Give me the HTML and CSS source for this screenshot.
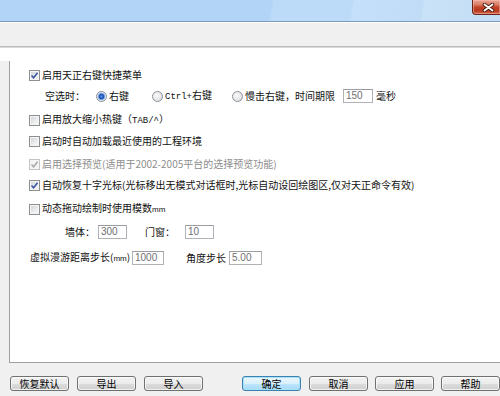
FILE: index.html
```html
<!DOCTYPE html>
<html lang="zh-CN">
<head>
<meta charset="utf-8">
<link rel="stylesheet" href="styles.css">
</head>
<body>
<div class="window">
  <div class="titlebar">
    <div class="close-btn">
      <svg width="13" height="9" viewBox="0 0 13 9"><path d="M2.5 1.5 L10.5 7.5 M10.5 1.5 L2.5 7.5" stroke="#4a1a10" stroke-width="3.6" stroke-linecap="round"/><path d="M2.5 1.5 L10.5 7.5 M10.5 1.5 L2.5 7.5" stroke="#fff" stroke-width="1.8" stroke-linecap="round"/></svg>
    </div>
  </div>
  <div class="toolbar"></div>
  <div class="topgap"></div>
  <div class="panel-row">
    <div class="side"></div>
    <div class="panel">
      <div class="row row-cb mt6"><span class="cb checked"><svg width="9" height="9" viewBox="0 0 9 9"><path d="M1.5 4.5 L3.6 6.8 L7.6 1.8" stroke="#3d57a3" stroke-width="1.6" fill="none"/></svg></span><span class="txt">启用天正右键快捷菜单</span></div>
      <div class="row row-radio mt5">
        <span class="lbl-empty">空选时：</span>
        <span class="opt opt-a"><span class="rb selected"></span><span class="txt">右键</span></span>
        <span class="opt opt-b"><span class="rb"></span><span class="txt"><span class="mono">Ctrl+</span>右键</span></span>
        <span class="opt opt-c"><span class="rb"></span><span class="txt">慢击右键，时间期限</span></span>
        <span class="tb tb-ms">150</span><span class="unit">毫秒</span>
      </div>
      <div class="row row-cb mt8"><span class="cb"></span><span class="txt">启用放大缩小热键（<span class="mono">TAB/^</span>）</span></div>
      <div class="row row-cb mt5"><span class="cb"></span><span class="txt">启动时自动加载最近使用的工程环境</span></div>
      <div class="row row-cb mt7 disabled"><span class="cb checked"><svg width="9" height="9" viewBox="0 0 9 9"><path d="M1.5 4.5 L3.6 6.8 L7.6 1.8" stroke="#a8a8a8" stroke-width="1.5" fill="none"/></svg></span><span class="txt">启用选择预览(适用于2002-2005平台的选择预览功能)</span></div>
      <div class="row row-cb mt5"><span class="cb checked"><svg width="9" height="9" viewBox="0 0 9 9"><path d="M1.5 4.5 L3.6 6.8 L7.6 1.8" stroke="#3d57a3" stroke-width="1.6" fill="none"/></svg></span><span class="txt">自动恢复十字光标(光标移出无模式对话框时,光标自动设回绘图区,仅对天正命令有效)</span></div>
      <div class="row row-cb mt8"><span class="cb"></span><span class="txt">动态拖动绘制时使用模数<span class="small">mm</span></span></div>
      <div class="row row-mod mt7">
        <span class="lbl-wall">墙体：</span><span class="tb tb-wall">300</span>
        <span class="lbl-door">门窗：</span><span class="tb tb-door">10</span>
      </div>
      <div class="row row-step mt10">
        <span class="lbl-dist">虚拟漫游距离步长(<span class="small">mm</span>)</span><span class="tb tb-dist">1000</span>
        <span class="lbl-angle">角度步长</span><span class="tb tb-angle">5.00</span>
      </div>
    </div>
  </div>
  <div class="buttons">
    <span class="btn">恢复默认</span>
    <span class="btn g8">导出</span>
    <span class="btn g8">导入</span>
    <span class="btn default g39">确定</span>
    <span class="btn g8">取消</span>
    <span class="btn g7">应用</span>
    <span class="btn g7">帮助</span>
  </div>
</div>
</body>
</html>
```
FILE: styles.css
```css
* { box-sizing: border-box; }
html, body { margin: 0; padding: 0; }
body {
  width: 500px;
  height: 396px;
  overflow: hidden;
  background: #f0f0f0;
  font-family: "Noto Sans CJK SC", "Noto Sans", sans-serif;
  font-size: 10px;
  color: #111;
}
.window { width: 500px; height: 396px; display: flex; flex-direction: column; }

.titlebar {
  height: 22px;
  flex: none;
  border-bottom: 1px solid #7d99bc;
  background: linear-gradient(100deg, #b2d4f6 0%, #b2d4f6 54%, #bcdbf9 54.5%, #bcdbf9 70%, #c4e0fa 70.5%, #c0dcf6 84%, #c9e2f7 84.5%, #c3ddf5 100%);
  display: flex;
  justify-content: flex-end;
  align-items: flex-start;
}
.close-btn {
  width: 28px;
  height: 15px;
  border: 1px solid #6b2417;
  border-top: none;
  border-right: none;
  border-radius: 0 0 0 4px;
  background: linear-gradient(#e9a796 0%, #d77a62 35%, #c2452a 50%, #b93a20 75%, #d0664a 100%);
  display: flex;
  align-items: center;
  justify-content: center;
  box-shadow: inset 0 0 0 1px rgba(255,200,190,0.45);
}
.close-btn svg { display: block; margin-left: 4px; }

.toolbar {
  height: 25px;
  flex: none;
  border-top: 1px solid #ffffff;
  border-bottom: 1px solid #bcbcbc;
  background: #f0f0f0;
}
.topgap {
  height: 14px;
  flex: none;
  background: #fff;
  border-top: 1px solid #d9d9d9;
}
.panel-row { display: flex; height: 302px; flex: none; }
.side { width: 9px; flex: none; background: #f0f0f0; }
.panel {
  flex: 1;
  background: #fff;
  border-left: 1px solid #a0a0a0;
  border-bottom: 1px solid #a0a0a0;
  display: flex;
  flex-direction: column;
}

.row { height: 16px; line-height: 16px; display: flex; align-items: center; white-space: nowrap; }
.mt5 { margin-top: 5px; }
.mt6 { margin-top: 6px; }
.mt7 { margin-top: 7px; }
.mt8 { margin-top: 8px; }
.mt10 { margin-top: 10px; }

.row-cb { padding-left: 19px; }
.row-cb .txt { margin-left: 2px; }
.disabled { color: #8d8d8d; }

.mono { font-family: "Liberation Mono", "DejaVu Sans Mono", monospace; font-size: 9px; }
.small { font-family: "Liberation Sans", sans-serif; font-size: 8px; }

.cb {
  width: 11px; height: 11px; flex: none;
  border: 1px solid #8e8f8f;
  background: linear-gradient(135deg, #cdd1d6 0%, #eceef0 60%, #f8f8f8 100%);
  box-shadow: inset 0 0 0 1px #f5f5f5;
  display: flex; align-items: center; justify-content: center;
}
.cb svg { display: block; }
.disabled .cb { border-color: #c4c4c4; background: #f4f4f4; }

.rb {
  width: 11px; height: 11px; flex: none;
  border-radius: 50%;
  border: 1px solid #8f9195;
  background: radial-gradient(circle at 40% 40%, #fafafa 0%, #e3e5e8 60%, #cfd2d6 100%);
}
.rb.selected {
  background: radial-gradient(circle at 50% 50%, #5d95e8 0px, #1d4fae 2.2px, #7fa9e4 3.2px, #dfe9f6 4.2px, #eef2f8 100%);
}

.row-radio { padding-left: 35px; }
.lbl-empty { width: 51px; flex: none; }
.opt { display: flex; align-items: center; flex: none; }
.opt .txt { margin-left: 2px; }
.opt-a { width: 56px; }
.opt-b { width: 80px; }
.opt-c { width: 111px; }
.unit { margin-left: 3px; }

.tb {
  height: 14px; flex: none;
  border: 1px solid #b0b2b8;
  border-top-color: #9a9ca2;
  background: #fff;
  font-family: "Liberation Sans", Arial, sans-serif;
  font-size: 10px;
  line-height: 12px;
  color: #707070;
  padding-left: 2px;
}
.tb-ms { width: 30px; }
.row-mod { padding-left: 55px; }
.lbl-wall { width: 33px; flex: none; }
.tb-wall { width: 29px; }
.lbl-door { margin-left: 18px; width: 40px; flex: none; }
.tb-door { width: 29px; }
.row-step { padding-left: 20px; }
.lbl-dist { width: 102px; flex: none; }
.tb-dist { width: 32px; }
.lbl-angle { margin-left: 22px; width: 43px; flex: none; }
.tb-angle { width: 33px; }

.buttons { display: flex; padding-top: 13px; padding-left: 10px; flex: none; }
.btn {
  width: 59px; height: 15px; flex: none;
  border: 1px solid #707070;
  border-radius: 3px;
  background: linear-gradient(#f2f2f2 0%, #ebebeb 50%, #dddddd 51%, #cfcfcf 100%);
  box-shadow: inset 0 0 0 1px rgba(255,255,255,0.7);
  text-align: center;
  line-height: 13px;
  font-size: 10px;
  color: #000;
}
.btn.default {
  border-color: #3c7fb1;
  background: linear-gradient(#eaf6fd 0%, #d9f0fc 50%, #bee6fd 51%, #a7d9f5 100%);
  box-shadow: inset 0 0 0 1px #a6e3fa;
}
.g7 { margin-left: 7px; }
.g8 { margin-left: 8px; }
.g39 { margin-left: 39px; }
```
